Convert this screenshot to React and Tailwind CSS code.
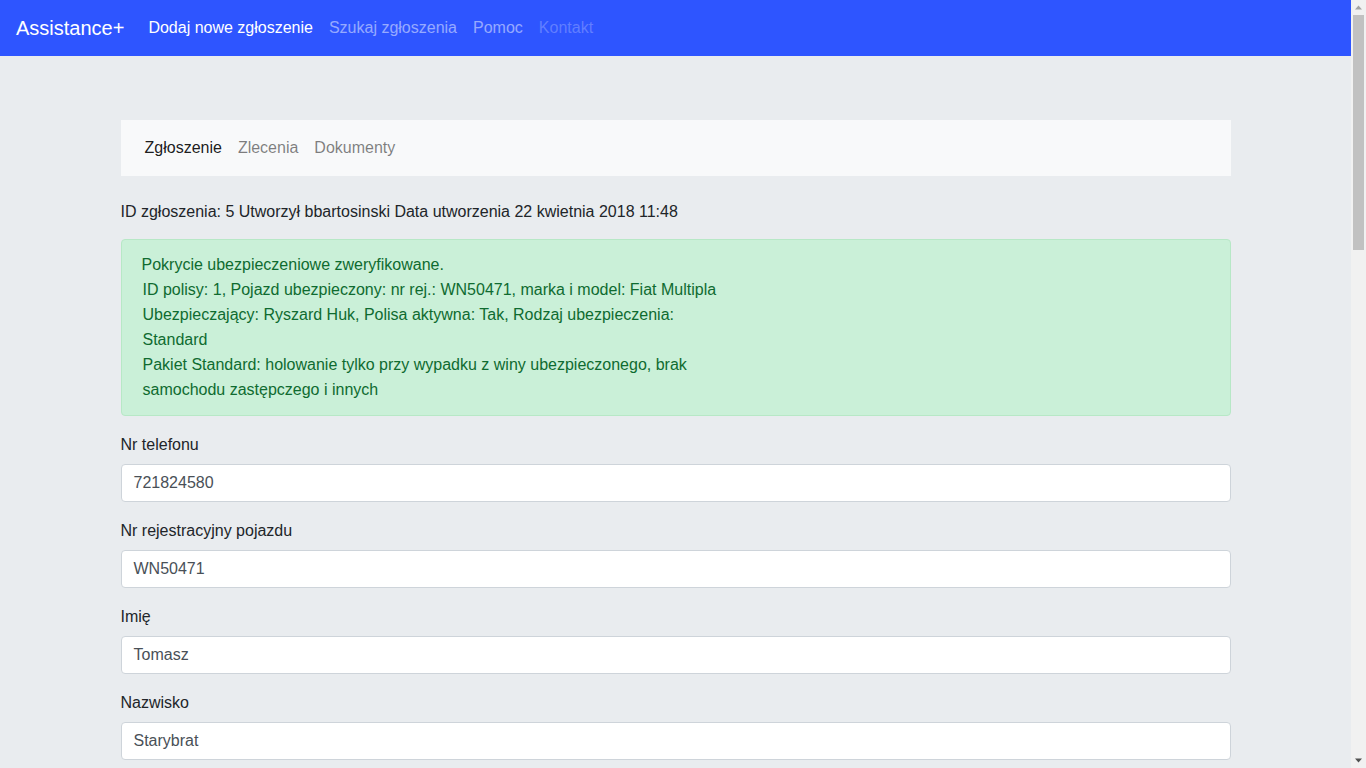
export default function App() {
  const fields = [
    ["Nr telefonu", "721824580"],
    ["Nr rejestracyjny pojazdu", "WN50471"],
    ["Imię", "Tomasz"],
    ["Nazwisko", "Starybrat"],
  ];
  return (
    <div className="flex h-screen overflow-hidden bg-[#e9ecef] text-[#212529] text-base leading-6" style={{ fontFamily: '"Liberation Sans", Arial, sans-serif' }}>
      <div className="flex-1 min-w-0">
        <nav className="flex items-center bg-[#2e55ff] px-4 py-2 h-14">
          <span className="text-white text-[20px] leading-[30px] mr-4">Assistance+</span>
          <div className="flex">
            <span className="px-2 text-white">Dodaj nowe zgłoszenie</span>
            <span className="px-2 text-white/50">Szukaj zgłoszenia</span>
            <span className="px-2 text-white/50">Pomoc</span>
            <span className="px-2 text-white/25">Kontakt</span>
          </div>
        </nav>
        <div className="w-[1110px] mx-auto mt-16 pb-10">
          <div className="flex items-center bg-[#f8f9fa] h-14 px-4">
            <span className="px-2 text-black/90">Zgłoszenie</span>
            <span className="px-2 text-black/50">Zlecenia</span>
            <span className="px-2 text-black/50">Dokumenty</span>
          </div>
          <p className="mt-6 mb-4 leading-[23px]">ID zgłoszenia: 5 Utworzył bbartosinski Data utworzenia 22 kwietnia 2018 11:48</p>
          <div className="bg-[#caf0d8] border border-[#b7e8c6] rounded px-5 pt-3 pb-[13px] text-[#0f6b30] leading-[25px] mb-4">
            <div>Pokrycie ubezpieczeniowe zweryfikowane.</div>
            <div className="pl-px max-w-[590px]">ID polisy: 1, Pojazd ubezpieczony: nr rej.: WN50471, marka i model: Fiat Multipla</div>
            <div className="pl-px max-w-[590px]">Ubezpieczający: Ryszard Huk, Polisa aktywna: Tak, Rodzaj ubezpieczenia: Standard</div>
            <div className="pl-px max-w-[590px]">Pakiet Standard: holowanie tylko przy wypadku z winy ubezpieczonego, brak samochodu zastępczego i innych</div>
          </div>
          {fields.map(([label, value]) => (
            <div key={label} className="mb-4">
              <label className="block pt-px mb-[7px]">{label}</label>
              <div className="h-[38px] bg-white border border-[#ced4da] rounded px-3 flex items-center text-[#495057]">{value}</div>
            </div>
          ))}
        </div>
      </div>
      <div className="w-[15px] shrink-0 bg-[#f1f1f1] flex flex-col items-center">
        <svg width="15" height="15" viewBox="0 0 15 15" className="shrink-0">
          <path d="M4 9.5 L7.5 5.5 L11 9.5 Z" fill="#a3a3a3" />
        </svg>
        <div className="w-[11px] h-[235px] bg-[#c1c1c1] shrink-0" />
        <div className="flex-1" />
        <svg width="15" height="15" viewBox="0 0 15 15" className="shrink-0">
          <path d="M4 5.5 L7.5 9.5 L11 5.5 Z" fill="#505050" />
        </svg>
      </div>
    </div>
  );
}
